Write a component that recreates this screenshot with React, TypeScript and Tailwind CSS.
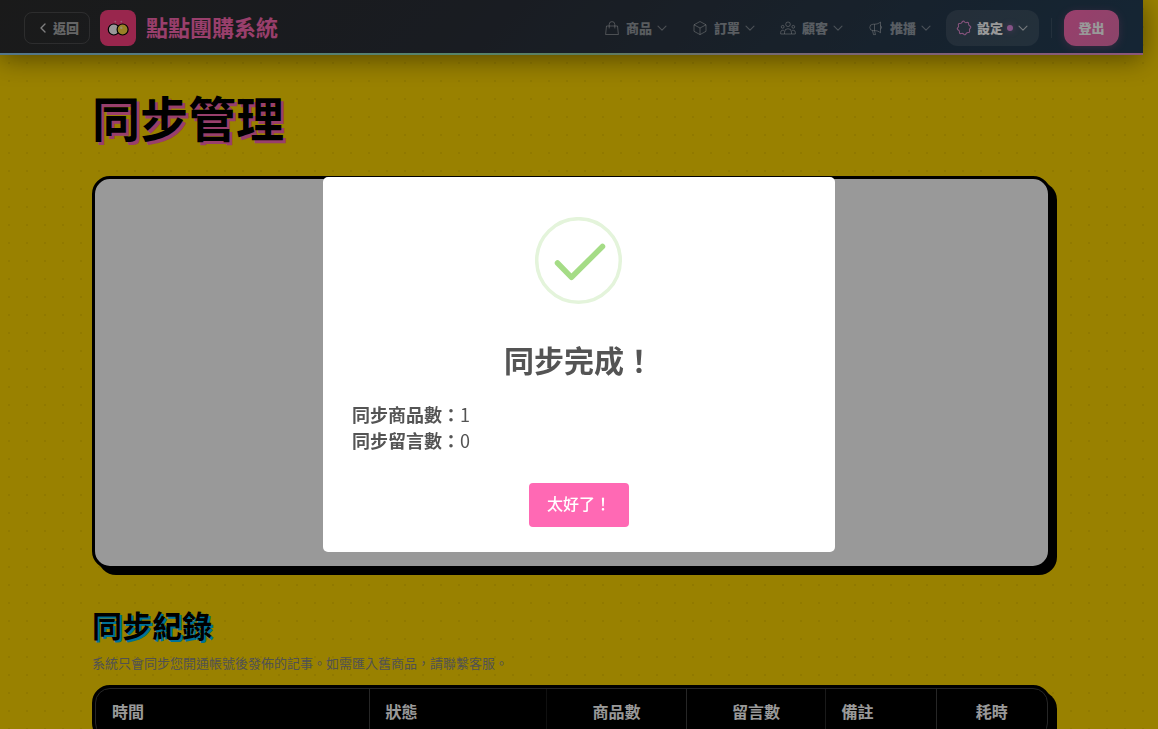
import React from "react";
import { ChevronLeft } from "lucide-react";

function BagIcon() {
  return (
    <svg viewBox="0 0 16 16" className="size-4" fill="none" stroke="currentColor" strokeWidth="1" strokeLinejoin="round">
      <path d="M2.500 6h11l.9 8.500H1.600z" />
      <path d="M5.200 8V4.400a2.800 2.800 0 0 1 5.600 0V8" strokeLinecap="round" />
    </svg>
  );
}

function BoxIcon() {
  return (
    <svg viewBox="0 0 16 16" className="size-4" fill="none" stroke="currentColor" strokeWidth="1" strokeLinejoin="round">
      <path d="M8 1.500 14 4.800v6.500L8 14.600 2 11.300V4.800z" />
      <path d="M2 4.800 8 8l6-3.200M8 8v6.600" />
    </svg>
  );
}

function PeopleIcon() {
  return (
    <svg viewBox="0 0 16 16" className="size-4" fill="none" stroke="currentColor" strokeWidth="1" strokeLinejoin="round">
      <circle cx="8" cy="4.300" r="2.300" />
      <circle cx="2.700" cy="6.800" r="1.400" />
      <circle cx="13.300" cy="6.800" r="1.400" />
      <path d="M4.500 14v-1.800a3.500 3.500 0 0 1 7 0V14zM4.500 14H.7v-1.700a2 2 0 0 1 3.600-1.300M11.500 14h3.800v-1.700a2 2 0 0 0-3.600-1.300" />
    </svg>
  );
}

function MegaphoneIcon() {
  return (
    <svg viewBox="0 0 16 16" className="size-4" fill="none" stroke="currentColor" strokeWidth="1" strokeLinejoin="round">
      <path d="M6.500 4.200H5a3.200 3.200 0 0 0 0 6.400h1.500c2.200 0 4.200.6 6 2.200V2c-1.800 1.600-3.800 2.200-6 2.200zM6.500 4.200v6.400M4.500 10.600l1 4h2l-1-4M12.500 5.700a1.900 1.900 0 0 1 0 3.400" />
    </svg>
  );
}

function GearIcon() {
  return (
    <svg viewBox="0 0 16 16" className="size-4 text-[#e08ad0]" fill="none" stroke="currentColor" strokeWidth="1.1" strokeLinejoin="round">
      <path d="M8 1.300Q9.200 3.200 10.500 2.600Q12.700 1.900 12.500 3.500Q12.400 5.300 13.600 5.800Q15.500 7 14.400 8Q13 9.200 13.500 10.500Q14 12.600 12.500 12.500Q10.700 12.400 10.300 13.400Q9 15.400 8 14.400Q6.800 13 5.500 13.500Q3.400 14 3.500 12.500Q3.600 10.700 2.600 10.300Q.6 9 1.600 8Q3 6.800 2.500 5.500Q2 3.400 3.500 3.500Q5.300 3.600 5.700 2.600Q7 .6 8 1.300z" />
    </svg>
  );
}

function Chevron() {
  return (
    <svg viewBox="0 0 12 12" className="size-3" fill="none" stroke="currentColor" strokeWidth="1.100" strokeLinecap="round" strokeLinejoin="round">
      <path d="M2 4.200 6 8.200l4-4" />
    </svg>
  );
}

function Logo() {
  return (
    <svg viewBox="0 0 36 36" className="size-9 rounded-lg bg-[#ff4081]">
      <circle cx="13.800" cy="19.500" r="5.500" fill="#fff" stroke="#000" strokeWidth="1.200" />
      <circle cx="22.600" cy="19.500" r="5.500" fill="#ffd740" stroke="#000" strokeWidth="1.200" />
      <circle cx="21.300" cy="17.800" r="1.200" fill="#fff" opacity=".6" />
      <circle cx="15.300" cy="11.600" r=".9" fill="#fff" opacity=".5" />
      <circle cx="21.300" cy="11.600" r=".9" fill="#fff" opacity=".5" />
    </svg>
  );
}

const menus = [
  { label: "商品", icon: <BagIcon /> },
  { label: "訂單", icon: <BoxIcon /> },
  { label: "顧客", icon: <PeopleIcon /> },
  { label: "推播", icon: <MegaphoneIcon /> },
];

function Header() {
  return (
    <header className="relative bg-[linear-gradient(135deg,#2c2c2c_0%,#2b2f38_40%,#2a3542_60%,#233f58_100%)] shadow-[0_4px_26px_rgba(0,0,0,0.45)]">
      <div className="flex h-[53px] items-center justify-between px-6 pt-[3px]">
        <div className="flex items-center gap-2.5">
          <button className="flex h-8 items-center gap-0.5 rounded-lg border border-white/15 px-2.5 text-[13px] font-black text-white/60">
            <ChevronLeft className="size-4 text-white/80" />
            返回
          </button>
          <a href="#home" className="flex items-center gap-2.5 text-[22px] font-bold text-[#ff69b4]">
            <Logo />
            <span className="pb-1 leading-8">點點團購系統</span>
          </a>
        </div>
        <nav className="flex items-center gap-1">
          {menus.map((m) => (
            <button key={m.label} className="flex h-9 items-center gap-1 px-2.5 text-[13px] font-black text-white/50">
              <span className="mr-0.5 text-white/40">{m.icon}</span>
              {m.label}
              <span className="text-white/40"><Chevron /></span>
            </button>
          ))}
          <button className="flex h-9 items-center gap-1 rounded-xl bg-white/10 px-2.5 text-[13px] font-black text-white">
            <span className="mr-px"><GearIcon /></span>
            設定
            <span className="size-1.5 rounded-full bg-[#e08ae0] shadow-[0_0_6px_#e08ae080]" />
            <span className="text-white/70"><Chevron /></span>
          </button>
          <span className="mx-2 h-5 w-px bg-white/10" />
          <button className="h-9 w-[55px] rounded-xl bg-[linear-gradient(135deg,#ff69b4,#e873b0)] text-[13px] font-black text-white shadow-[0_2px_8px_rgba(255,105,180,0.25)]">
            登出
          </button>
        </nav>
      </div>
      <div className="h-[2px] bg-[linear-gradient(90deg,#8ac5e8_0%,#90dcb0_40%,#98d0a0_52%,#c0b0c0_66%,#e890cc_100%)]" />
    </header>
  );
}

const columns = [
  { label: "時間", style: "w-[273px] text-left border-r-[#404040]" },
  { label: "狀態", style: "w-[177px] text-left border-r-[#1c1c1c]" },
  { label: "商品數", style: "w-[140px] text-center border-r-[#404040]" },
  { label: "留言數", style: "w-[139px] text-center border-r-[#2c2c2c]" },
  { label: "備註", style: "w-[111px] text-left border-r-[#404040]" },
  { label: "耗時", style: "text-center border-r-transparent" },
];

export default function App() {
  return (
    <div className="h-screen overflow-hidden bg-[#ffd700] bg-[radial-gradient(circle,rgba(0,0,0,0.06)_1px,transparent_1.5px)] bg-[length:18px_18px] font-['Noto_Sans_CJK_TC',sans-serif] text-black">
      <div className="pr-[15px]">
        <Header />
        <main className="mx-auto max-w-[959px] pt-8">
          <h1 className="text-[48px] leading-[58px] font-bold [text-shadow:3px_3px_0_#ff69b4]">同步管理</h1>
          <section aria-label="同步" className="mt-[31px] h-[393px] rounded-[18px] border-[3px] border-black bg-white shadow-[6px_6px_0_#000]" />
          <h2 className="mt-[35px] text-[30px] leading-[41px] font-bold [text-shadow:2px_2px_0_#00bfff]">同步紀錄</h2>
          <p className="mt-2 text-[13px] leading-5 text-[#888888]">系統只會同步您開通帳號後發佈的記事。如需匯入舊商品，請聯繫客服。</p>
          <div className="mt-3 rounded-[18px] border-[3px] border-black bg-black shadow-[6px_6px_0_#000]">
            <div className="rounded-[15px] border border-[#404040]">
              <table className="w-full table-fixed text-base font-bold text-white">
                <thead>
                  <tr>
                    {columns.map((c) => (
                      <th key={c.label} className={`h-12 border-r pr-[15px] pb-1 pl-4 font-bold ${c.style}`}>
                        {c.label}
                      </th>
                    ))}
                  </tr>
                </thead>
              </table>
            </div>
          </div>
        </main>
      </div>
      <div className="fixed inset-0 flex items-center justify-center bg-black/40">
        <div role="dialog" aria-modal="true" aria-labelledby="dialog-title" className="flex w-[512px] flex-col items-center rounded-[5px] bg-white pt-10 pb-[25px] text-[#545454]">
          <svg viewBox="0 0 88 88" className="size-[88px]" fill="none">
            <circle cx="43.500" cy="43.500" r="41.800" stroke="#e4f4db" strokeWidth="3.500" />
            <path d="M22.500 46 36.500 60.300 67.500 29.500" stroke="#a5dc86" strokeWidth="5.500" strokeLinecap="round" strokeLinejoin="round" />
          </svg>
          <h2 id="dialog-title" className="mt-8 text-[30px] leading-[44px] font-bold">同步完成！</h2>
          <div className="mt-5 w-full px-[29px] text-[18px] leading-[26px]">
            <p><strong>同步商品數：</strong>1</p>
            <p><strong>同步留言數：</strong>0</p>
          </div>
          <button className="mt-[30px] h-11 w-[100px] rounded bg-[#ff69b4] pb-1 text-base font-medium text-white">太好了！</button>
        </div>
      </div>
    </div>
  );
}
